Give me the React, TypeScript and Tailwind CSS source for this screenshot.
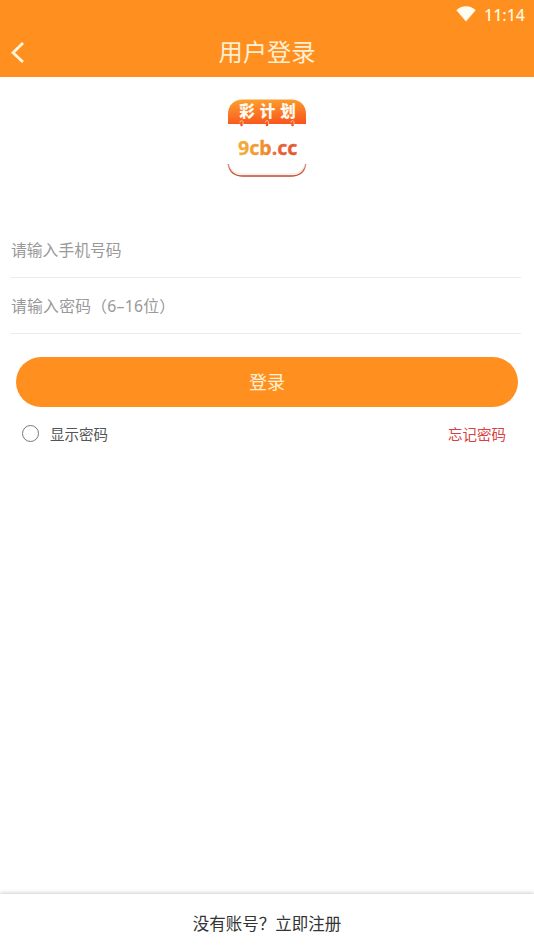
import { useState } from 'react';

function WifiIcon() {
  return (
    <svg viewBox="0 0 20 16" className="h-4 w-5" fill="#fffdf2" aria-hidden="true">
      <path d="M0.4 4.2C3 1.4 6.4 0.2 10 0.2s7 1.2 9.600 4L10 15.400z" />
    </svg>
  );
}

function StatusBar() {
  return (
    <div className="flex h-[27px] items-center justify-end gap-2 pr-[9px]">
      <WifiIcon />
      <span className="pt-[2px] font-['Noto_Sans',sans-serif] text-[16px] leading-none font-medium text-[#fff6dc]">
        11:14
      </span>
    </div>
  );
}

function Header() {
  return (
    <header className="h-[77px] bg-[#ff9020]">
      <StatusBar />
      <div className="grid h-[50px] grid-cols-[60px_1fr_60px] items-center">
        <button type="button" className="flex h-full items-center pl-[11px]" aria-label="返回">
          <svg viewBox="0 0 14 22" className="h-[22px] w-[14px]" fill="none" stroke="#fff6dc" strokeWidth="2.8">
            <path d="M12 2L2 11.700l10 9.300" />
          </svg>
        </button>
        <h1 className="text-center text-[24.3px] leading-none font-normal text-[#ffefd2]">用户登录</h1>
      </div>
    </header>
  );
}

function Logo() {
  return (
    <svg viewBox="0 0 80 80" className="h-20 w-20" role="img" aria-label="彩计划 9cb.cc">
      <defs>
        <linearGradient id="banner" x1="0.3" y1="0" x2="0.45" y2="1">
          <stop offset="0" stopColor="#fba02f" />
          <stop offset="1" stopColor="#f9571d" />
        </linearGradient>
        <linearGradient id="wordmark" x1="0" y1="0" x2="1" y2="0">
          <stop offset="0" stopColor="#f2b03c" />
          <stop offset="0.5" stopColor="#f18a32" />
          <stop offset="0.7" stopColor="#e8603a" />
          <stop offset="1" stopColor="#e25a2f" />
        </linearGradient>
        <linearGradient id="rim" x1="0" y1="0" x2="0" y2="1">
          <stop offset="0" stopColor="#e08a6c" />
          <stop offset="1" stopColor="#b9482b" />
        </linearGradient>
      </defs>
      <path d="M1 26V16C1 7 7 1.5 16 1.5h48c9 0 15 5.5 15 14.5v10z" fill="url(#banner)" />
      <path
        d="M1.300 66C2.500 74 8 78 16 78h48c8 0 13.500-4 14.700-12"
        fill="none"
        stroke="url(#rim)"
        strokeWidth="1.500"
      />
      <path d="M2 67c2 6 7 9 14 9h48c7 0 12-3 14-9" fill="none" stroke="#f6d9cb" strokeWidth="0.8" />
      {[14.5, 40, 65.5].map((x) => (
        <g key={x}>
          <path d={`M${x - 1.5} 24.500c0-2.500 3-2.500 3 0v2.500`} fill="none" stroke="#fbe0c0" strokeWidth="0.8" />
          <circle cx={x} cy="27" r="1.300" fill="#e65a28" />
        </g>
      ))}
      <g fill="#fffaf0" fontFamily="'Noto Sans CJK SC', sans-serif" fontSize="15.5" fontWeight="900" textAnchor="middle">
        <text x="20" y="18.7">彩</text>
        <text x="40.5" y="18.7">计</text>
        <text x="61" y="18.7">划</text>
      </g>
      <text
        x="11"
        y="56.5"
        textLength="59.5"
        lengthAdjust="spacingAndGlyphs"
        fill="url(#wordmark)"
        stroke="url(#wordmark)"
        strokeWidth="0.3"
        fontFamily="'Noto Sans', sans-serif"
        fontSize="20"
        fontWeight="700"
      >
        9cb.cc
      </text>
    </svg>
  );
}

const fieldClass =
  'block h-14 w-full border-b border-[#ebebeb] bg-transparent text-[15.8px] font-normal text-[#333] outline-none placeholder:text-[#999]';

export default function App() {
  const [showPassword, setShowPassword] = useState(false);

  return (
    <div className="flex h-screen flex-col bg-white font-['Noto_Sans','Noto_Sans_CJK_SC',sans-serif]">
      <Header />

      <main className="flex-1">
        <div className="flex justify-center pt-[21px]">
          <Logo />
        </div>

        <form onSubmit={(e) => e.preventDefault()}>
          <div className="mt-11 pr-[13px] pl-[11px]">
            <input type="tel" placeholder="请输入手机号码" className={fieldClass} />
            <input
              type={showPassword ? 'text' : 'password'}
              placeholder="请输入密码（6–16位）"
              className={`${fieldClass} tracking-[0.25px]`}
            />
          </div>

          <button
            type="submit"
            className="mx-4 mt-[23px] block h-[50px] w-[502px] rounded-full bg-[#ff9020] text-lg leading-none text-[#fff0d4]"
          >
            登录
          </button>

          <div className="mt-[15px] flex items-center justify-between pr-7 pl-[22px] text-[14.5px]">
            <label className="flex items-center gap-[11px] text-[#555]">
              <input
                type="checkbox"
                checked={showPassword}
                onChange={(e) => setShowPassword(e.target.checked)}
                className="size-[17px] appearance-none rounded-full border border-[#777] checked:bg-[#ff9020]"
              />
              <span className="pt-[2px]">显示密码</span>
            </label>
            <a href="#" className="pt-[2px] text-[#d9413f]">
              忘记密码
            </a>
          </div>
        </form>
      </main>

      <footer className="flex h-[55px] items-center justify-center pt-[5px] text-[16.5px] text-[#333] shadow-[0_-1px_4px_rgba(0,0,0,0.2)]">
        没有账号？立即注册
      </footer>
    </div>
  );
}
